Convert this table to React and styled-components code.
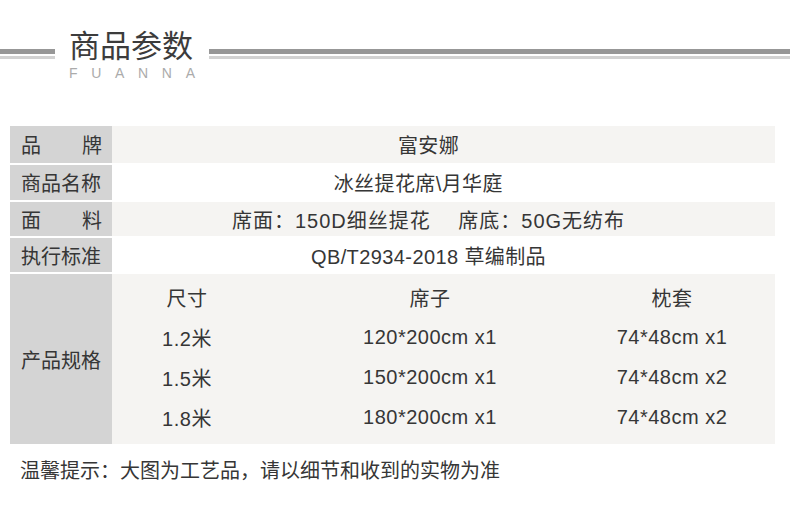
import styled, { createGlobalStyle } from 'styled-components';

const GlobalStyle = createGlobalStyle`
  html, body {
    margin: 0;
    padding: 0;
    background: #fff;
  }
  body {
    font-family: "Liberation Sans", "Noto Sans CJK SC", sans-serif;
    color: #363636;
  }
`;

const Page = styled.div`
  width: 790px;
  height: 516px;
  overflow: hidden;
`;

const Header = styled.div`
  display: flex;
  align-items: flex-start;
  padding-top: 30px;
`;

const Rule = styled.div`
  flex: ${({ grow }) => (grow ? 1 : 'none')};
  width: ${({ grow }) => (grow ? 'auto' : '55px')};
  margin-top: 19px;
  height: 2px;
  border-top: 5px solid #979797;
  border-bottom: 3px solid #d2d2d2;
`;

const TitleBlock = styled.div`
  width: 126px;
  margin: 0 14px;
  display: flex;
  flex-direction: column;
  align-items: flex-start;
`;

const Title = styled.div`
  font-size: 31px;
  line-height: 34px;
  color: #3c3c3c;
  white-space: nowrap;
`;

const SubTitle = styled.div`
  width: 100%;
  margin-top: 1px;
  font-size: 14px;
  line-height: 16px;
  color: #ababab;
  display: flex;
  justify-content: space-between;
`;

const Table = styled.div`
  margin: 45px 15px 0 10px;
  display: flex;
  flex-direction: column;
  gap: 2px;
`;

const Row = styled.div`
  display: grid;
  grid-template-columns: 102px 1fr;
  height: ${({ h }) => h}px;
`;

const Label = styled.div`
  background: #d4d4d4;
  display: flex;
  align-items: center;
  justify-content: ${({ spread }) => (spread ? 'space-between' : 'flex-start')};
  padding: 0 10px 0 11px;
  font-size: 20px;
  white-space: nowrap;
`;

const Value = styled.div`
  background: ${({ shade }) => (shade ? '#f5f4f2' : '#fff')};
  display: flex;
  align-items: center;
  justify-content: center;
  padding-right: 30px;
  font-size: 20px;
  letter-spacing: ${({ wide }) => (wide ? '1px' : '0.4px')};
  white-space: pre;
`;

const SpecBox = styled.div`
  background: #f5f4f2;
  padding-top: 3px;
`;

const SpecRow = styled.div`
  display: grid;
  grid-template-columns: 150px 336px 148px;
  height: 40px;
  align-items: center;
  text-align: center;
  font-size: 20px;
  letter-spacing: 0.5px;
`;

const Note = styled.div`
  margin: 13px 0 0 20px;
  font-size: 20px;
  line-height: 28px;
`;

const info = [
  { label: ['品', '牌'], value: '富安娜', h: 37, shade: true },
  { label: ['商品名称'], value: '冰丝提花席\\月华庭　', h: 35 },
  { label: ['面', '料'], value: '席面：150D细丝提花　 席底：50G无纺布', h: 34, shade: true, wide: true },
  { label: ['执行标准'], value: 'QB/T2934-2018 草编制品', h: 34 },
];

const specs = [
  ['尺寸', '席子', '枕套'],
  ['1.2米', '120*200cm x1', '74*48cm x1'],
  ['1.5米', '150*200cm x1', '74*48cm x2'],
  ['1.8米', '180*200cm x1', '74*48cm x2'],
];

export default function App() {
  return (
    <Page>
      <GlobalStyle />
      <Header>
        <Rule />
        <TitleBlock>
          <Title>商品参数</Title>
          <SubTitle>
            {'FUANNA'.split('').map((c, i) => (
              <span key={i}>{c}</span>
            ))}
          </SubTitle>
        </TitleBlock>
        <Rule grow />
      </Header>

      <Table>
        {info.map((r) => (
          <Row key={r.value} h={r.h}>
            <Label spread={r.label.length > 1}>
              {r.label.map((t) => (
                <span key={t}>{t}</span>
              ))}
            </Label>
            <Value shade={r.shade} wide={r.wide}>{r.value}</Value>
          </Row>
        ))}
        <Row h={170}>
          <Label>产品规格</Label>
          <SpecBox>
            {specs.map((s, i) => (
              <SpecRow key={i}>
                {s.map((c, j) => (
                  <span key={j}>{c}</span>
                ))}
              </SpecRow>
            ))}
          </SpecBox>
        </Row>
      </Table>

      <Note>温馨提示：大图为工艺品，请以细节和收到的实物为准</Note>
    </Page>
  );
}
